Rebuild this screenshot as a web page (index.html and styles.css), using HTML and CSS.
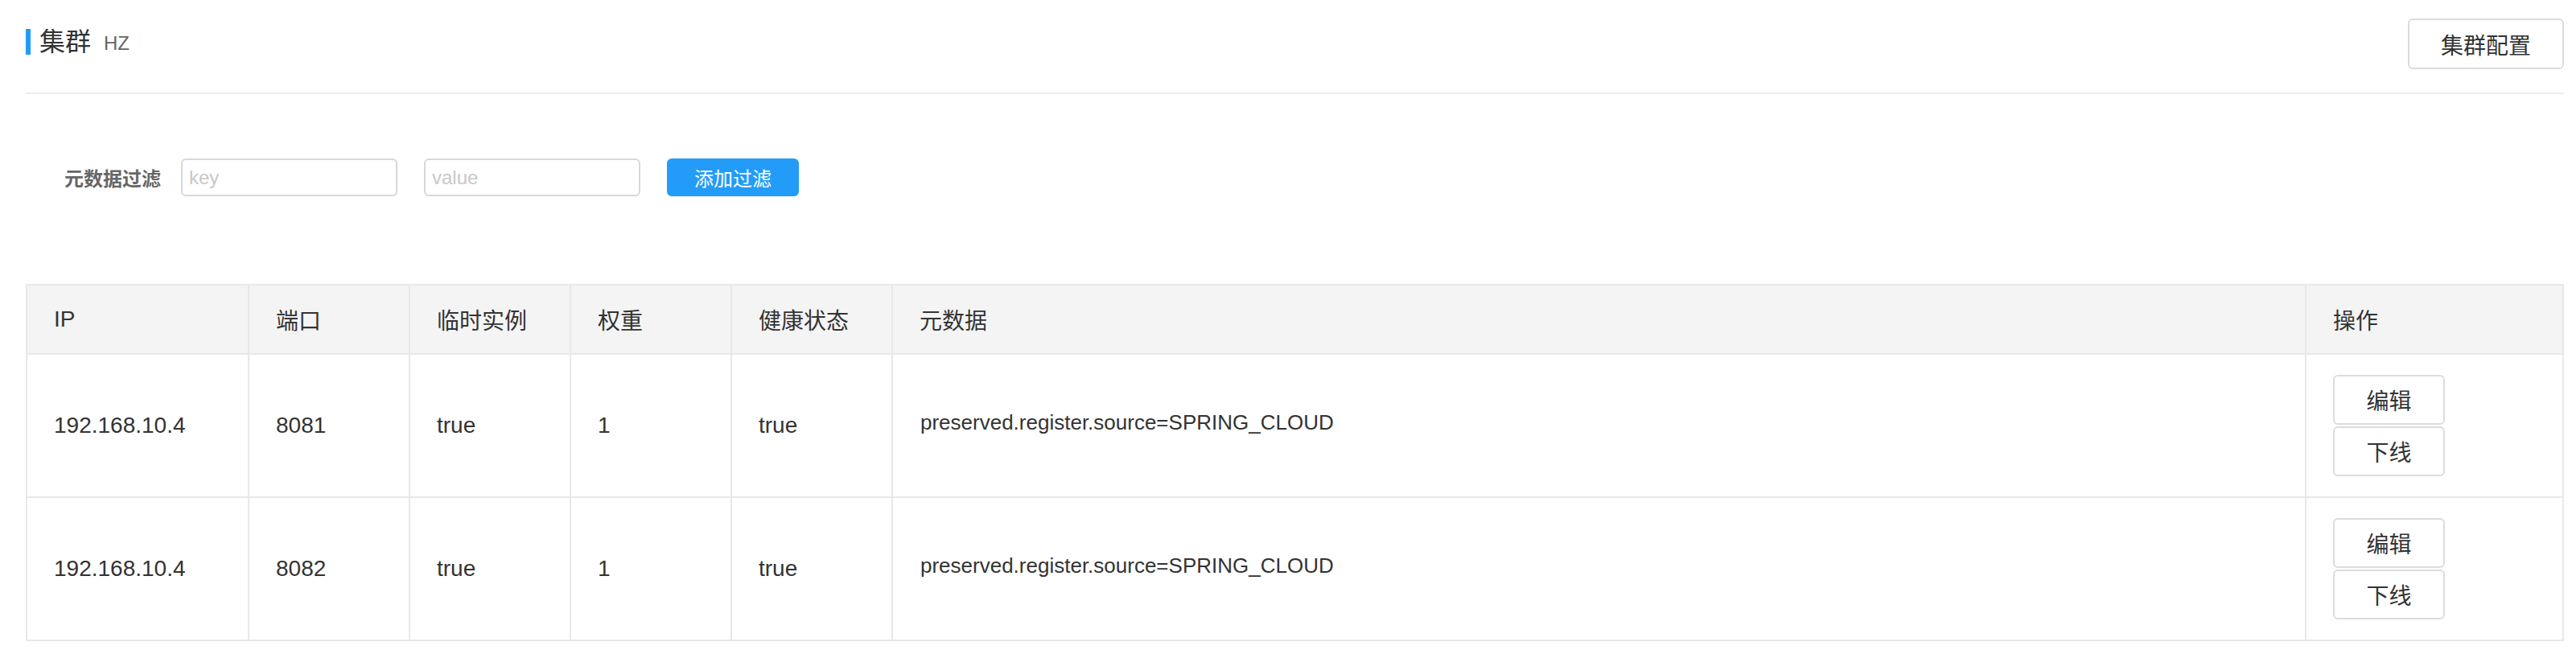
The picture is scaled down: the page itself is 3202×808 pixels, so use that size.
FILE: index.html
```html
<!DOCTYPE html>
<html lang="zh-CN">
<head>
<meta charset="utf-8">
<title>集群</title>
<link rel="stylesheet" href="styles.css">
</head>
<body>
<div class="page">
  <div class="header">
    <div class="title">
      <span class="title-bar"></span>
      <span class="title-text">集群</span>
      <span class="title-sub">HZ</span>
    </div>
    <button class="btn btn-default btn-lg">集群配置</button>
  </div>
  <div class="filter">
    <span class="filter-label">元数据过滤</span>
    <input class="filter-input" type="text" placeholder="key">
    <input class="filter-input" type="text" placeholder="value">
    <button class="btn btn-primary">添加过滤</button>
  </div>
  <table class="grid">
    <colgroup>
      <col class="c-ip"><col class="c-n"><col class="c-n"><col class="c-n"><col class="c-n"><col><col class="c-op">
    </colgroup>
    <thead>
      <tr><th>IP</th><th>端口</th><th>临时实例</th><th>权重</th><th>健康状态</th><th>元数据</th><th>操作</th></tr>
    </thead>
    <tbody>
      <tr>
        <td>192.168.10.4</td><td>8081</td><td>true</td><td>1</td><td>true</td>
        <td class="meta">preserved.register.source=SPRING_CLOUD</td>
        <td><div class="ops"><button class="btn btn-default btn-op">编辑</button><button class="btn btn-default btn-op">下线</button></div></td>
      </tr>
      <tr>
        <td>192.168.10.4</td><td>8082</td><td>true</td><td>1</td><td>true</td>
        <td class="meta">preserved.register.source=SPRING_CLOUD</td>
        <td><div class="ops"><button class="btn btn-default btn-op">编辑</button><button class="btn btn-default btn-op">下线</button></div></td>
      </tr>
    </tbody>
  </table>
</div>
</body>
</html>
```

FILE: styles.css
```css
* { box-sizing: border-box; }
html, body { margin: 0; padding: 0; background: #fff; }
body {
  font-family: "Liberation Sans", "Noto Sans CJK SC", sans-serif;
  color: #333;
}
.page { padding: 0 15px 0 32px; }

.header {
  display: flex;
  justify-content: space-between;
  align-items: flex-start;
  padding-top: 23px;
  padding-bottom: 29px;
  border-bottom: 2px solid #ececec;
}
.title { display: flex; align-items: center; margin-top: 13px; height: 32px; }
.title-bar { width: 6px; height: 32px; background: #1f9cf8; margin-right: 11px; }
.title-text { font-size: 32px; line-height: 32px; color: #333; }
.title-sub { font-size: 24px; color: #666; margin-left: 16px; margin-top: 4px; }

.btn {
  font-family: "Liberation Sans", "Noto Sans CJK SC", sans-serif;
  border-radius: 6px;
  cursor: pointer;
  padding: 0;
  margin: 0;
}
.btn-default { background: #fff; border: 2px solid #dcdcdc; color: #333; }
.btn-lg { width: 194px; height: 63px; font-size: 28px; }
.btn-primary {
  background: #229cf8;
  border: none;
  color: #fff;
  width: 164px;
  height: 47px;
  font-size: 24px;
  margin-left: 33px;
}

.filter {
  display: flex;
  align-items: center;
  margin-top: 80px;
  padding-left: 48px;
}
.filter-label { font-size: 24px; font-weight: 600; color: #666; margin-right: 25px; }
.filter-input {
  width: 269px;
  height: 47px;
  border: 2px solid #d8d8d8;
  border-radius: 6px;
  padding: 0 8px;
  font-size: 24px;
  font-family: "Liberation Sans", sans-serif;
  color: #333;
  outline: none;
}
.filter-input + .filter-input { margin-left: 33px; }
.filter-input::placeholder { color: #c8c8c8; }

.grid {
  margin-top: 109px;
  width: 3155px;
  table-layout: fixed;
  border-collapse: collapse;
  font-size: 28px;
}
.c-ip { width: 276px; }
.c-n { width: 200px; }
.c-op { width: 320px; }
.grid th, .grid td {
  border: 2px solid #e8e8e8;
  padding: 0 0 0 33px;
  text-align: left;
  vertical-align: middle;
  font-weight: normal;
  color: #333;
}
.grid th { background: #f4f4f4; height: 86px; }
.grid td { height: 178px; }
.grid td.meta { font-size: 26px; padding-left: 34px; padding-bottom: 8px; }
.ops { display: flex; flex-direction: column; gap: 2px; }
.btn-op { width: 139px; height: 62px; font-size: 28px; }
```
